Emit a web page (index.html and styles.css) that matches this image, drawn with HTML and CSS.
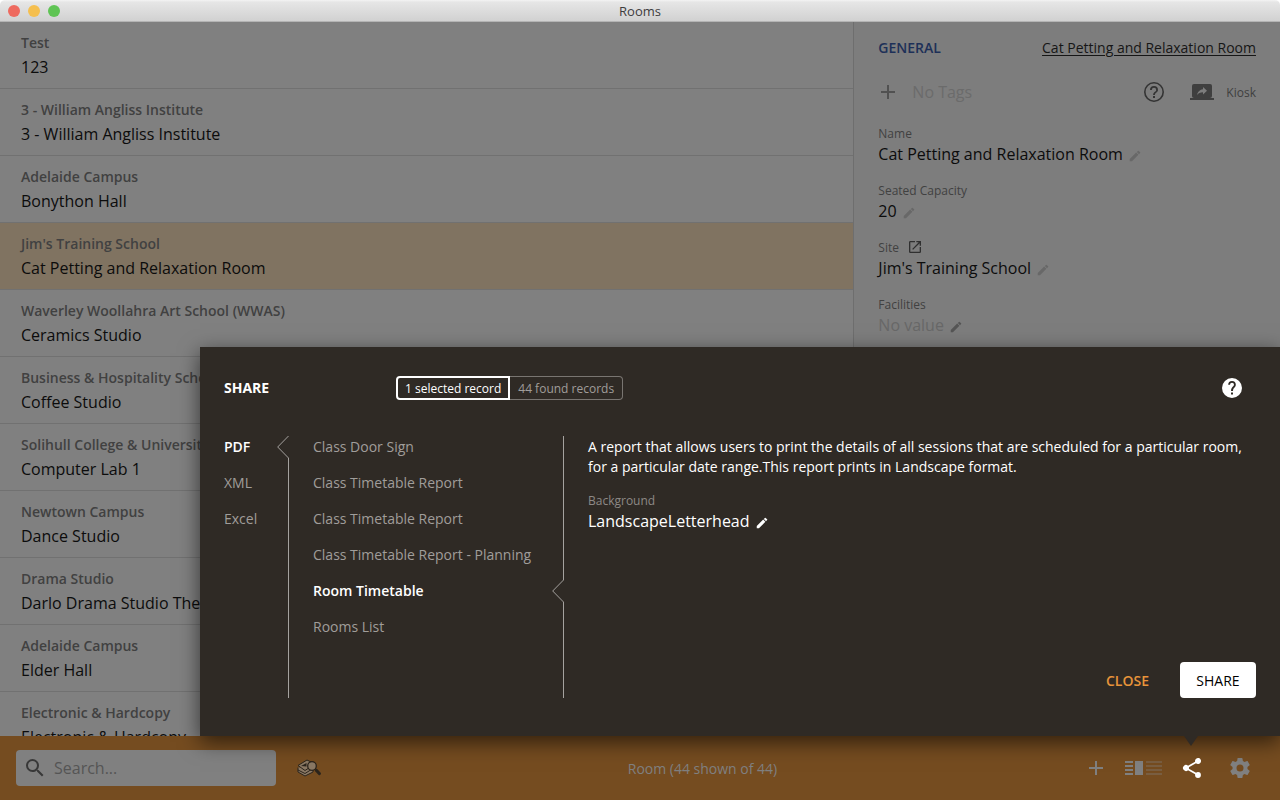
FILE: index.html
```html
<!DOCTYPE html>
<html lang="en">
<head>
<meta charset="utf-8">
<title>Rooms</title>
<link rel="stylesheet" href="styles.css">
</head>
<body>
<svg class="sprite" aria-hidden="true">
  <symbol id="edit" viewBox="0 0 24 24"><path d="M3 17.25V21h3.75L17.81 9.94l-3.75-3.75L3 17.25zM20.71 7.04a1 1 0 0 0 0-1.41l-2.34-2.34a1 1 0 0 0-1.41 0l-1.83 1.83 3.75 3.75 1.83-1.83z"/></symbol>
  <symbol id="plus" viewBox="0 0 24 24"><path d="M19 13h-6v6h-2v-6H5v-2h6V5h2v6h6v2z"/></symbol>
  <symbol id="plus-tight" viewBox="2 2 20 20"><path d="M19 13h-6v6h-2v-6H5v-2h6V5h2v6h6v2z"/></symbol>
  <symbol id="notch" viewBox="0 0 12 22"><path d="M11.5 0 .7 11l10.8 11" fill="none" stroke="#a5a29f"/></symbol>
</svg>

<header class="titlebar">
  <div class="lights"><span class="light red"></span><span class="light yellow"></span><span class="light green"></span></div>
  <h1 class="window-title">Rooms</h1>
</header>

<main class="content">
  <ul class="rooms">
    <li class="room"><span class="room-site">Test</span><span class="room-name">123</span></li>
    <li class="room"><span class="room-site">3 - William Angliss Institute</span><span class="room-name">3 - William Angliss Institute</span></li>
    <li class="room"><span class="room-site">Adelaide Campus</span><span class="room-name">Bonython Hall</span></li>
    <li class="room selected"><span class="room-site">Jim's Training School</span><span class="room-name">Cat Petting and Relaxation Room</span></li>
    <li class="room"><span class="room-site">Waverley Woollahra Art School (WWAS)</span><span class="room-name">Ceramics Studio</span></li>
    <li class="room"><span class="room-site">Business &amp; Hospitality School</span><span class="room-name">Coffee Studio</span></li>
    <li class="room"><span class="room-site">Solihull College &amp; University</span><span class="room-name">Computer Lab 1</span></li>
    <li class="room"><span class="room-site">Newtown Campus</span><span class="room-name">Dance Studio</span></li>
    <li class="room"><span class="room-site">Drama Studio</span><span class="room-name">Darlo Drama Studio Theatre</span></li>
    <li class="room"><span class="room-site">Adelaide Campus</span><span class="room-name">Elder Hall</span></li>
    <li class="room"><span class="room-site">Electronic &amp; Hardcopy</span><span class="room-name">Electronic &amp; Hardcopy</span></li>
  </ul>

  <aside class="detail">
    <div class="detail-head">
      <h2 class="detail-title">GENERAL</h2>
      <a class="detail-link" href="#room">Cat Petting and Relaxation Room</a>
    </div>
    <div class="tags">
      <button class="icon-button add-tag" aria-label="Add tag"><svg class="icon-tag"><use href="#plus-tight"/></svg></button>
      <span class="no-tags">No Tags</span>
      <button class="icon-button help-small" aria-label="Help"><svg class="icon" viewBox="0 0 24 24"><path d="M11 18h2v-2h-2v2zm1-16a10 10 0 1 0 0 20 10 10 0 0 0 0-20zm0 18.400a8.400 8.400 0 1 1 0-16.800 8.400 8.400 0 0 1 0 16.800zM12 6a4 4 0 0 0-4 4h1.800a2.200 2.200 0 0 1 4.400 0c0 2-3.100 1.750-3.100 5h1.800c0-2.250 3.100-2.500 3.100-5a4 4 0 0 0-4-4z"/></svg></button>
      <button class="icon-button kiosk"><svg class="icon" viewBox="0 0 24 24"><path d="M20 18a2 2 0 0 0 2-2V6a2 2 0 0 0-2-2H4a2 2 0 0 0-2 2v10c0 1.100.9 2 2 2H0v2h24v-2h-4zm-7-3.530v-2.190c-2.780 0-4.610.850-6 2.720.560-2.670 2.110-5.330 6-5.870V7l4 3.730-4 3.740z"/></svg><span>Kiosk</span></button>
    </div>
    <dl class="fields">
      <div class="field"><dt>Name</dt><dd>Cat Petting and Relaxation Room<svg class="pencil"><use href="#edit"/></svg></dd></div>
      <div class="field"><dt>Seated Capacity</dt><dd>20<svg class="pencil"><use href="#edit"/></svg></dd></div>
      <div class="field"><dt>Site<svg class="open" viewBox="0 0 24 24"><path d="M19 19H5V5h7V3H5a2 2 0 0 0-2 2v14a2 2 0 0 0 2 2h14a2 2 0 0 0 2-2v-7h-2v7zM14 3v2h3.590l-9.830 9.830 1.410 1.410L19 6.410V10h2V3h-7z"/></svg></dt><dd>Jim's Training School<svg class="pencil"><use href="#edit"/></svg></dd></div>
      <div class="field"><dt>Facilities</dt><dd class="empty">No value<svg class="pencil strong"><use href="#edit"/></svg></dd></div>
    </dl>
  </aside>
</main>

<footer class="toolbar">
  <label class="search">
    <svg class="icon" viewBox="0 0 24 24"><path d="M15.500 14h-.79l-.28-.27A6.470 6.470 0 0 0 16 9.500 6.500 6.500 0 1 0 9.500 16c1.610 0 3.090-.59 4.230-1.570l.27.28v.79l5 4.990L20.490 19l-4.990-5zm-6 0a4.500 4.500 0 1 1 0-9 4.500 4.500 0 0 1 0 9z"/></svg>
    <input class="search-input" type="text" placeholder="Search..." aria-label="Search">
  </label>
  <button class="icon-button" aria-label="Find records">
    <svg class="icon" viewBox="0 0 24 24">
      <path d="M1 14v2l7 4 8-4v-3" fill="#8a7864" stroke="#2b241c"/>
      <path d="M1 11.500v2.500l7 3.500 8-5" fill="#8a7864" stroke="#2b241c"/>
      <path d="M1 9.500 10 4l8 4-10 6.500z" fill="#8a7864" stroke="#2b241c"/>
      <path d="M4 10l5.500-3v3.500z" fill="#2b241c"/>
      <circle cx="15" cy="10" r="4.300" fill="#8a7864" stroke="#2b241c" stroke-width="1.300"/>
      <path d="m19.500 14.500 2.800 3" stroke="#2b241c" stroke-width="3.200" stroke-linecap="round"/>
    </svg>
  </button>
  <p class="status">Room (44 shown of 44)</p>
  <div class="tools">
    <button class="icon-button" aria-label="Add"><svg class="icon"><use href="#plus"/></svg></button>
    <button class="icon-button" aria-label="Layout">
      <svg class="icon-layout" viewBox="0 0 40 24">
        <path d="M1 5h8v2H1zM1 9h8v2H1zM1 13h8v2H1zM1 17h8v2H1zM11 5h8v14h-8z"/>
        <path opacity=".35" d="M22 5h16v2H22zM22 9h16v2H22zM22 13h16v2H22zM22 17h16v2H22z"/>
      </svg>
    </button>
    <button class="icon-button active" aria-label="Share"><svg class="icon" viewBox="0 0 24 24"><path d="M18 16.080c-.76 0-1.440.3-1.960.77L8.910 12.700c.05-.23.09-.46.09-.7s-.04-.47-.09-.7l7.050-4.110A3 3 0 1 0 15 5c0 .24.04.47.09.7L8.040 9.810a3 3 0 1 0 0 4.380l7.120 4.160c-.05.21-.08.43-.08.65A2.920 2.920 0 1 0 18 16.080z"/></svg></button>
    <button class="icon-button settings" aria-label="Settings"><svg class="icon" viewBox="0 0 24 24"><path d="M19.430 12.980c.04-.32.07-.64.07-.98s-.03-.66-.07-.98l2.110-1.650c.19-.15.24-.42.12-.64l-2-3.460c-.12-.22-.39-.3-.61-.22l-2.490 1c-.52-.4-1.080-.73-1.690-.98l-.38-2.650A.49.49 0 0 0 14 2h-4c-.25 0-.46.18-.49.42l-.38 2.650c-.61.25-1.170.59-1.690.98l-2.490-1c-.23-.09-.49 0-.61.22l-2 3.460c-.13.22-.07.49.12.64l2.110 1.650c-.04.32-.07.65-.07.98s.03.66.07.98l-2.110 1.650c-.19.15-.24.42-.12.64l2 3.460c.12.22.39.3.61.22l2.490-1c.52.4 1.080.73 1.690.98l.38 2.650c.03.24.24.42.49.42h4c.25 0 .46-.18.49-.42l.38-2.650c.61-.25 1.170-.59 1.690-.98l2.490 1c.23.09.49 0 .61-.22l2-3.460c.12-.22.07-.49-.12-.64l-2.110-1.650zM12 15.500a3.500 3.500 0 1 1 0-7 3.500 3.500 0 0 1 0 7z"/></svg></button>
  </div>
</footer>

<section class="share-panel" aria-label="Share">
  <div class="share-head">
    <h2 class="share-title">SHARE</h2>
    <div class="scope">
      <button class="scope-option chosen">1 selected record</button>
      <button class="scope-option">44 found records</button>
    </div>
    <button class="icon-button share-help" aria-label="Help"><svg class="icon" viewBox="0 0 24 24"><path d="M12 2a10 10 0 1 0 0 20 10 10 0 0 0 0-20zm1 16.500h-2v-2h2v2zm2-7.500c-1 1-2 1.700-2 4h-2c0-2.700 1.200-3.800 2.200-4.800.5-.5.8-1 .8-1.500a2 2 0 0 0-4 0H8.200a3.800 3.800 0 0 1 7.600 0c0 1-.3 1.700-.8 2.300z"/></svg></button>
  </div>
  <div class="share-body">
    <ul class="choices formats">
      <li class="choice current"><button class="choice-button">PDF</button><svg class="notch"><use href="#notch"/></svg></li>
      <li class="choice"><button class="choice-button">XML</button></li>
      <li class="choice"><button class="choice-button">Excel</button></li>
    </ul>
    <ul class="choices reports">
      <li class="choice"><button class="choice-button">Class Door Sign</button></li>
      <li class="choice"><button class="choice-button">Class Timetable Report</button></li>
      <li class="choice"><button class="choice-button">Class Timetable Report</button></li>
      <li class="choice"><button class="choice-button">Class Timetable Report - Planning</button></li>
      <li class="choice current"><button class="choice-button">Room Timetable</button><svg class="notch"><use href="#notch"/></svg></li>
      <li class="choice"><button class="choice-button">Rooms List</button></li>
    </ul>
    <div class="report">
      <p class="description">A report that allows users to print the details of all sessions that are scheduled for a particular room, for a particular date range.This report prints in Landscape format.</p>
      <div class="option-label">Background</div>
      <div class="option-value">LandscapeLetterhead<svg class="pencil"><use href="#edit"/></svg></div>
      <div class="actions">
        <button class="close">CLOSE</button>
        <button class="share">SHARE</button>
      </div>
    </div>
  </div>
</section>
</body>
</html>
```
FILE: styles.css
```css
* { box-sizing: border-box; }
body {
  margin: 0;
  height: 100vh;
  display: flex;
  flex-direction: column;
  position: relative;
  overflow: hidden;
  background: #fff;
  font-family: "Open Sans", "Noto Sans", sans-serif;
  font-size: 14px;
}
h1, h2, p, ul, dl, dd { margin: 0; padding: 0; }
ul { list-style: none; }
button { font: inherit; color: inherit; background: none; border: 0; padding: 0; margin: 0; }
svg { fill: currentColor; flex: none; }
.sprite { position: absolute; width: 0; height: 0; }
.icon { display: block; width: 24px; height: 24px; }
.icon-button { display: flex; align-items: center; }

.titlebar {
  flex: none;
  display: grid;
  grid-template-columns: 1fr auto 1fr;
  align-items: center;
  height: 22px;
  padding: 0 8px;
  border-bottom: 1px solid #b4b4b4;
  border-radius: 5px 5px 0 0;
  background: linear-gradient(#f4f4f4, #e6e6e6 10%, #d1d1d1);
}
.lights { display: flex; gap: 8px; }
.light { width: 12px; height: 12px; border-radius: 50%; }
.red { background: #ee6a5f; }
.yellow { background: #f5bf4f; }
.green { background: #5fc454; }
.window-title { font-size: 13px; font-weight: 400; line-height: 20px; color: #3d3d3d; }

.content { flex: 1; min-height: 0; display: grid; grid-template-columns: 2fr 1fr; }
.rooms { overflow: hidden; background: #808080; }
.room {
  display: flex;
  flex-direction: column;
  padding: 9px 21px;
  border-bottom: 1px solid #717171;
  line-height: 24px;
}
.room-site { font-weight: 600; color: #414141; }
.room-name { font-size: 16px; color: #0c0c0c; }
.selected { background: #807361; }

.detail {
  padding: 14px 24px 0 24px;
  border-left: 1px solid #6e6e6e;
  background: #7d7d7d;
}
.detail-head { display: flex; justify-content: space-between; align-items: center; line-height: 24px; }
.detail-title { font-size: 14px; font-weight: 600; color: #1d3058; }
.detail-link { color: #161616; text-underline-offset: 2px; }
.tags { display: flex; align-items: center; height: 24px; margin-top: 20px; color: #343434; }
.icon-tag { width: 20px; height: 20px; }
.add-tag { color: #515151; }
.no-tags { margin-left: 14px; font-size: 16px; color: #6b6b6b; }
.help-small { margin-left: auto; }
.kiosk { gap: 12px; margin-left: 24px; font-size: 12px; color: #3f3f3f; }
.fields { margin-top: 20px; }
.field { margin-bottom: 15px; }
.field dt { display: flex; align-items: center; height: 18px; font-size: 12px; color: #414141; }
.field dd { display: flex; align-items: center; height: 24px; font-size: 16px; color: #0c0c0c; }
.field .empty { color: #686868; }
.pencil { width: 14px; height: 14px; margin: 4px 0 0 5px; color: #686868; }
.strong { color: #555; }
.open { width: 16px; height: 16px; margin-left: 8px; color: #303030; }

.toolbar {
  flex: none;
  display: flex;
  align-items: center;
  height: 64px;
  padding: 0 28px 0 16px;
  background: #754c20;
  color: #808080;
}
.search {
  display: flex;
  align-items: center;
  width: 260px;
  height: 36px;
  margin-right: 21px;
  padding: 0 7px;
  border-radius: 4px;
  background: #808080;
  color: #383838;
}
.search-input {
  flex: 1;
  min-width: 0;
  margin-left: 7px;
  padding: 0;
  border: 0;
  outline: 0;
  background: none;
  font: inherit;
  font-size: 16px;
}
.search-input::placeholder { color: #555; opacity: 1; }
.status { flex: 1; text-align: center; color: #808080; }
.tools { display: flex; gap: 16px; }
.icon-layout { width: 40px; height: 24px; }
.active { color: #fff; position: relative; z-index: 2; }
.active::before {
  content: "";
  position: absolute;
  left: 4px;
  top: -20px;
  border: 7px solid transparent;
  border-top: 10px solid #2f2a25;
  border-bottom: 0;
}
.settings { margin-left: 8px; }

.share-panel {
  position: absolute;
  left: 200px;
  right: 0;
  bottom: 64px;
  padding: 29px 24px 38px;
  background: #2f2a25;
  color: #fff;
  box-shadow: 0 6px 20px rgba(0, 0, 0, .6);
}
.share-head { display: flex; align-items: center; height: 24px; margin-bottom: 36px; }
.share-title { width: 172px; font-size: 14px; line-height: 20px; font-weight: 700; }
.scope { display: flex; }
.scope-option {
  height: 24px;
  padding: 0 8px;
  border: 1px solid #797571;
  border-left: 0;
  border-radius: 0 4px 4px 0;
  font-size: 12px;
  color: #a09d9a;
}
.chosen { padding: 0 7px; border: 2px solid #fff; border-radius: 4px 0 0 4px; color: #fff; }
.share-help { margin: 0 12px 0 auto; }
.share-body { display: flex; min-height: 262px; }
.choices {
  flex: none;
  display: flex;
  flex-direction: column;
  gap: 14px;
  border-right: 1px solid #a5a29f;
}
.formats { width: 65px; }
.reports { width: 275px; padding-left: 24px; }
.choice { position: relative; height: 22px; line-height: 22px; color: #a09d9a; }
.current { color: #fff; font-weight: 600; }
.notch { position: absolute; right: -1px; top: 0; width: 12px; height: 22px; background: #2f2a25; }
.report { flex: 1; display: flex; flex-direction: column; padding: 1px 0 0 24px; }
.description { line-height: 20px; }
.option-label { margin-top: 15px; font-size: 12px; line-height: 18px; color: #8d8986; }
.option-value { display: flex; align-items: center; height: 22px; font-size: 16px; }
.option-value .pencil { color: #fff; }
.actions { display: flex; justify-content: flex-end; gap: 31px; margin-top: auto; }
.close { font-weight: 600; color: #e8943a; }
.share { min-width: 76px; height: 36px; padding: 0 16px; border-radius: 4px; background: #fff; color: #000; }
```
